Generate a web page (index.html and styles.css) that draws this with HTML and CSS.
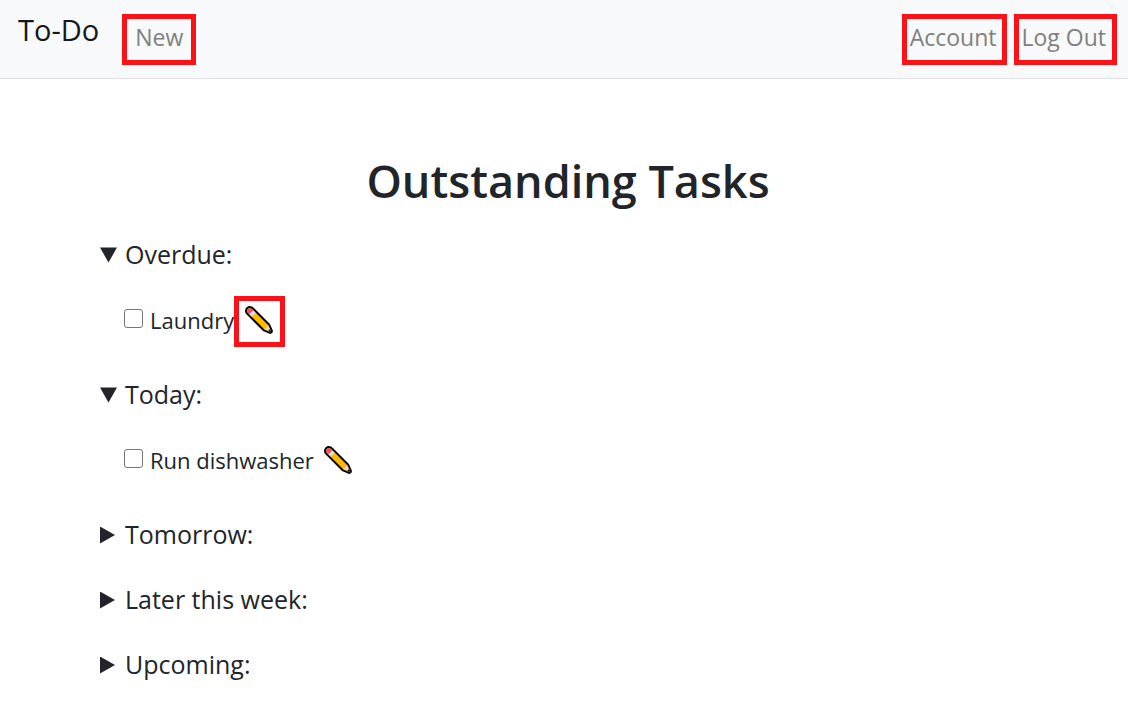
FILE: index.html
```html
<!DOCTYPE html>
<html lang="en">
<head>
<meta charset="utf-8">
<meta name="viewport" content="width=device-width, initial-scale=1">
<title>To-Do</title>
<link rel="stylesheet" href="styles.css">
</head>
<body>
<svg class="symbols" aria-hidden="true">
  <symbol id="pencil" viewBox="0 0 28 28">
    <path d="M1.200 5.900C.4 3 3 .4 5.900 1.200c.8.2 1.400.6 2 1.200L24 18.500l2.700 5.900c.7 1.500-.8 3-2.300 2.300L18.500 24 2.400 7.900c-.6-.6-1-1.200-1.200-2z" fill="#ffb900" stroke="#000" stroke-width="2" stroke-linejoin="round"/>
    <path d="M2.200 5.500c-.5-2 1.300-3.800 3.300-3.300.7.200 1.100.5 1.600 1L8.300 4.400 4.400 8.300 3.200 7.100c-.5-.5-.8-.9-1-1.600z" fill="#e9546b"/>
    <path d="M8.300 4.400l2.500 2.500-3.900 3.900-2.500-2.500z" fill="#dcdce0"/>
    <path d="M23.200 19.100l2.200 4.900-1.500 1.400-4.800-2.200z" fill="#f3d0ae"/>
    <path d="M24.900 23l1 2.200c.2.500-.2.900-.7.700L23 24.900z" fill="#222"/>
  </symbol>
</svg>
<header class="navbar">
  <a class="brand" href="#">To-Do</a>
  <nav class="nav" aria-label="Main">
    <a class="nav-link nav-link-new" href="#">New</a>
    <a class="nav-link nav-link-account" href="#">Account</a>
    <a class="nav-link" href="#">Log Out</a>
  </nav>
</header>
<main class="container">
  <h1 class="title">Outstanding Tasks</h1>
  <details class="group" open>
    <summary class="summary">Overdue:</summary>
    <div class="task">
      <input class="check" type="checkbox" id="laundry">
      <label class="task-name" for="laundry">Laundry</label>
      <button class="edit edit-marked" type="button" aria-label="Edit Laundry"><svg class="pencil"><use href="#pencil"/></svg></button>
    </div>
  </details>
  <details class="group" open>
    <summary class="summary">Today:</summary>
    <div class="task">
      <input class="check" type="checkbox" id="dishwasher">
      <label class="task-name" for="dishwasher">Run dishwasher</label>
      <button class="edit" type="button" aria-label="Edit Run dishwasher"><svg class="pencil"><use href="#pencil"/></svg></button>
    </div>
  </details>
  <details class="group"><summary class="summary">Tomorrow:</summary></details>
  <details class="group"><summary class="summary">Later this week:</summary></details>
  <details class="group"><summary class="summary">Upcoming:</summary></details>
</main>
</body>
</html>
```

FILE: styles.css
```css
* { box-sizing: border-box; }

body {
  margin: 0;
  background: #fff;
  color: #212529;
  font-family: "Open Sans", "Noto Sans", sans-serif;
  font-size: 23px;
}

.symbols { position: absolute; width: 0; height: 0; }

.navbar {
  display: flex;
  align-items: flex-start;
  gap: 23px;
  padding: 14px 11px 13px 18px;
  background: #f8f9fa;
  border-bottom: 1px solid #dee2e6;
}

.brand {
  color: #161719;
  font-size: 29px;
  line-height: 32px;
  text-decoration: none;
}

.nav { display: flex; flex: 1; gap: 7px; }

.nav-link {
  padding: 0 6px 5px 3px;
  border: 5px solid #fb1118;
  color: #7f8081;
  line-height: 36px;
  text-decoration: none;
  white-space: nowrap;
}

.nav-link-new { padding-left: 8px; padding-right: 8px; }
.nav-link-account { margin-left: auto; padding-right: 5px; }

.container { padding: 70px 92px 0 100px; }

.title {
  margin: 0 0 21px;
  font-size: 45px;
  font-weight: 600;
  line-height: 64px;
  text-align: center;
}

.group { padding-bottom: 25px; }

.summary {
  display: flex;
  align-items: center;
  height: 40px;
  font-size: 25px;
  list-style: none;
  cursor: pointer;
}

.summary::before {
  content: "";
  width: 17px;
  height: 17px;
  margin: 2px 8px 0 0;
  background: #212529;
  clip-path: polygon(0 0, 15px 50%, 0 100%);
}

.group[open] > .summary::before {
  clip-path: polygon(0 1px, 100% 1px, 50% 16px);
}

.task {
  display: flex;
  align-items: center;
  height: 50px;
  margin: 22px 0 3px;
  padding-left: 24px;
  font-size: 22px;
}

.task-name { padding-bottom: 3px; }

.check {
  appearance: none;
  width: 19px;
  height: 19px;
  margin: 0 7px 5px 0;
  border: 1px solid #767676;
  border-radius: 3px;
  background: #fff;
}

.check:checked { background: #0d6efd; }

.edit {
  display: flex;
  align-items: center;
  justify-content: center;
  width: 51px;
  height: 51px;
  margin: 0;
  padding: 0 2px 2px 0;
  border: 5px solid transparent;
  background: none;
}

.edit-marked { border-color: #fb1118; background: #fff; }

.pencil { width: 28px; height: 28px; }
```
